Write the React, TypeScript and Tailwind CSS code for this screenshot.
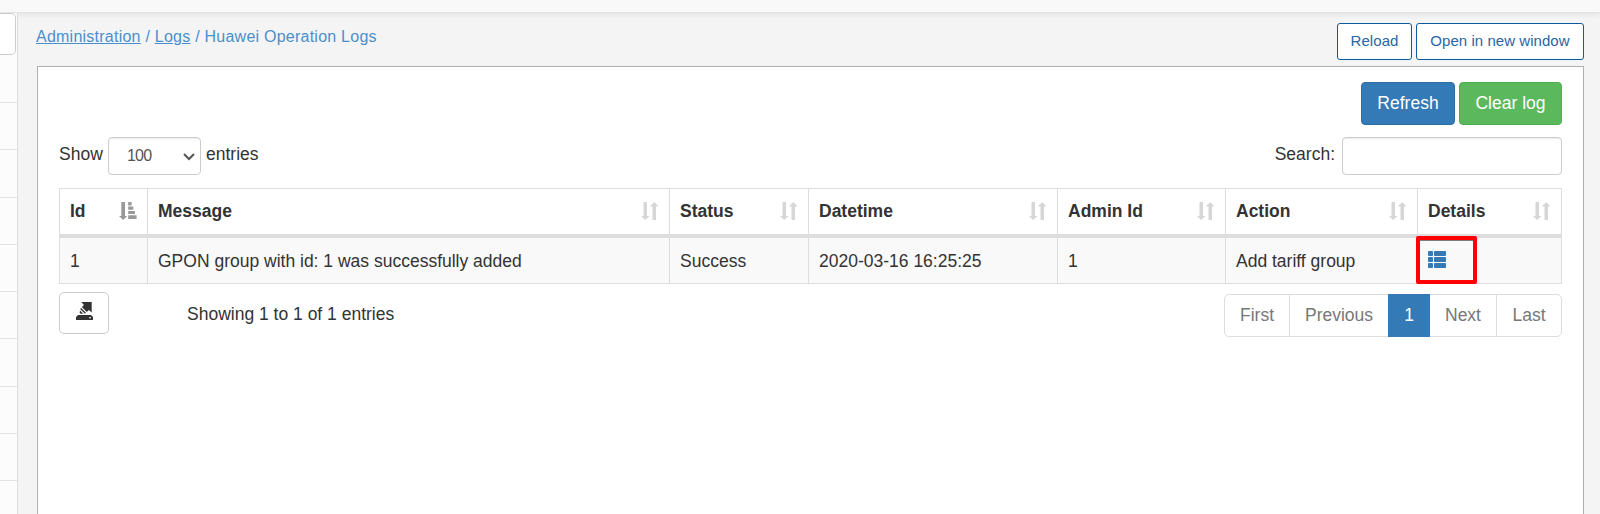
import React from "react";

const columns = ["Id", "Message", "Status", "Datetime", "Admin Id", "Action", "Details"];
const cells = ["1", "GPON group with id: 1 was successfully added", "Success", "2020-03-16 16:25:25", "1", "Add tariff group"];

const gridCols = "grid grid-cols-[88px_522px_139px_249px_168px_192px_144px]";

function SortIcon() {
  return (
    <svg width="18" height="18" viewBox="0 0 18 18" fill="#d6d6d6">
      <path d="M2.5 0H6V14H8.5L4.25 18L0 14H2.5Z" />
      <path d="M11.5 18V4.5H8.8L13.25 0L17.6 4.5H15V18Z" />
    </svg>
  );
}

function SortAscIcon() {
  return (
    <svg width="18" height="18" viewBox="0 0 18 18" fill="#999">
      <path d="M2.3 0H6V14H8.2L4.1 18L0 14H2.3Z" />
      <path d="M9.2 0H12.6V3.5H9.2ZM9.2 4.5H14.3V7.7H9.2ZM9.2 8.9H16V12.1H9.2ZM9.2 13.2H17.6V17H9.2Z" />
    </svg>
  );
}

function ListIcon() {
  return (
    <svg width="18" height="17" viewBox="0 0 18 17" fill="#337ab7">
      <rect x="0" y="0" width="5" height="5" rx="1" />
      <rect x="6" y="0" width="12" height="5" rx="0.8" />
      <rect x="0" y="6" width="5" height="5" rx="1" />
      <rect x="6" y="6" width="12" height="5" rx="0.8" />
      <rect x="0" y="12" width="5" height="5" rx="1" />
      <rect x="6" y="12" width="12" height="5" rx="0.8" />
    </svg>
  );
}

function ExportIcon() {
  return (
    <svg width="17" height="18" viewBox="0 0 17 18" fill="#333">
      <path d="M5.2 0H15.7V10.5L12.8 7.9L10.8 9.9L5.9 5L8 2.9Z" />
      <path d="M5.1 5.9L9.9 10.7L8.9 11.7L4.1 6.9Z" />
      <path d="M4 8.6L7.2 11.8H4.6L3.6 10.8Z" />
      <path fillRule="evenodd" d="M2 13H15L17 15V18H0V15ZM13 15.2V16.2H15V15.2Z" />
    </svg>
  );
}

export default function App() {
  return (
    <div className="flex h-[514px] w-[1600px] flex-col overflow-hidden bg-[#f4f4f4] font-['Liberation_Sans',Arial,sans-serif] text-[17.5px] text-[#333]">
      <header className="h-[13px] shrink-0 border-b border-[#e4e4e4] bg-[#f9f9f9] shadow-[0_1px_6px_rgba(0,0,0,0.09)]" />
      <div className="flex min-h-0 flex-1">
        <aside className="w-[18px] shrink-0 border-r border-[#dcdcdc] bg-[#fcfcfc]">
          <div className="h-[42px] w-4 rounded-r-[5px] border border-l-0 border-[#ccc] bg-white" />
          <div className="h-12 border-b border-[#e2e2e2]" />
          {[47, 48, 47, 47, 47, 48, 47, 47].map((h, i) => (
            <div key={i} className="border-b border-[#e2e2e2]" style={{ height: h }} />
          ))}
        </aside>
        <main className="flex min-w-0 flex-1 flex-col pr-4 pl-[19px]">
          <div className="flex h-[53px] shrink-0 items-start justify-between">
            <nav className="mt-[14px] -ml-px text-[16px] leading-5 tracking-[0.24px] whitespace-pre text-[#4a8fcc]">
              <a className="underline">Administration</a> / <a className="underline">Logs</a> / Huawei Operation Logs
            </nav>
            <div className="mt-[10px] flex gap-1 text-[15px] tracking-[0.05px] text-[#2a66a2]">
              <button className="h-[37px] w-[75px] rounded-[3px] border border-[#0d5a9c] bg-white">Reload</button>
              <button className="h-[37px] w-[168px] rounded-[3px] border border-[#0d5a9c] bg-white">Open in new window</button>
            </div>
          </div>
          <section className="flex-1 border border-b-0 border-[#b0b0b0] bg-white px-[21px] pt-[15px]">
            <div className="flex justify-end gap-1 text-white">
              <button className="h-[43px] w-[94px] rounded-[4px] border border-[#2e6da4] bg-[#337ab7] pb-px">Refresh</button>
              <button className="h-[43px] w-[103px] rounded-[4px] border border-[#4cae4c] bg-[#5cb85c] pb-px">Clear log</button>
            </div>
            <div className="mt-3 flex h-[38px] items-center justify-between">
              <div className="flex items-center">
                <span className="w-[49px] pb-1">Show</span>
                <div className="flex h-[38px] w-[93px] items-center justify-between rounded-[4px] border border-[#ccc] pr-[5px] pl-[18px] text-[16px] tracking-[-0.8px] text-[#555] shadow-[inset_0_1px_1px_rgba(0,0,0,0.075)]">
                  100
                  <svg className="mt-px" width="12" height="8" viewBox="0 0 12 8" fill="none" stroke="#555" strokeWidth="2">
                    <path d="M1 1L6 6L11 1" />
                  </svg>
                </div>
                <span className="ml-[5px] pb-1">entries</span>
              </div>
              <div className="flex items-center">
                <span className="mr-[7px] pb-1">Search:</span>
                <div className="h-[38px] w-[220px] rounded-[4px] border border-[#ccc] shadow-[inset_0_1px_1px_rgba(0,0,0,0.075)]" />
              </div>
            </div>
            <div className="mt-[13px] border-t border-l border-[#ddd]">
              <div className={gridCols + " h-[49px] border-b-4 border-[#ddd] font-bold"}>
                {columns.map((c, i) => (
                  <div key={c} className="flex items-center justify-between border-r border-[#ddd] pr-[10px] pb-px pl-[10px]">
                    {c}
                    {i === 0 ? <SortAscIcon /> : <SortIcon />}
                  </div>
                ))}
              </div>
              <div className={gridCols + " h-[46px] border-b border-[#ddd] bg-[#f9f9f9]"}>
                {cells.map((c, i) => (
                  <div key={i} className="flex items-center border-r border-[#ddd] pt-[2px] pl-[10px]">{c}</div>
                ))}
                <div className="relative flex items-center border-r border-[#ddd] pb-[2px] pl-[10px]">
                  <ListIcon />
                  <div className="absolute -top-[2px] -left-[2px] h-[48px] w-[61px] rounded-[2px] border-4 border-[#f00] shadow-[inset_0_1px_0_#7d7d7d]" />
                </div>
              </div>
            </div>
            <div className="flex items-start pt-2">
              <button className="flex h-[42px] w-[50px] items-center justify-center rounded-[5px] border border-[#ccc] bg-white pb-[5px]">
                <ExportIcon />
              </button>
              <span className="mt-[10px] ml-[78px] leading-6">Showing 1 to 1 of 1 entries</span>
              <div className="mt-[2px] ml-auto flex h-[43px] rounded-[5px] border border-[#ddd] text-[#777]">
                <span className="flex w-[65px] items-center justify-center border-r border-[#ddd]">First</span>
                <span className="flex w-[98px] items-center justify-center">Previous</span>
                <span className="-my-px flex w-[42px] items-center justify-center bg-[#337ab7] text-white">1</span>
                <span className="flex w-[67px] items-center justify-center border-r border-[#ddd]">Next</span>
                <span className="flex w-16 items-center justify-center">Last</span>
              </div>
            </div>
          </section>
        </main>
      </div>
    </div>
  );
}
